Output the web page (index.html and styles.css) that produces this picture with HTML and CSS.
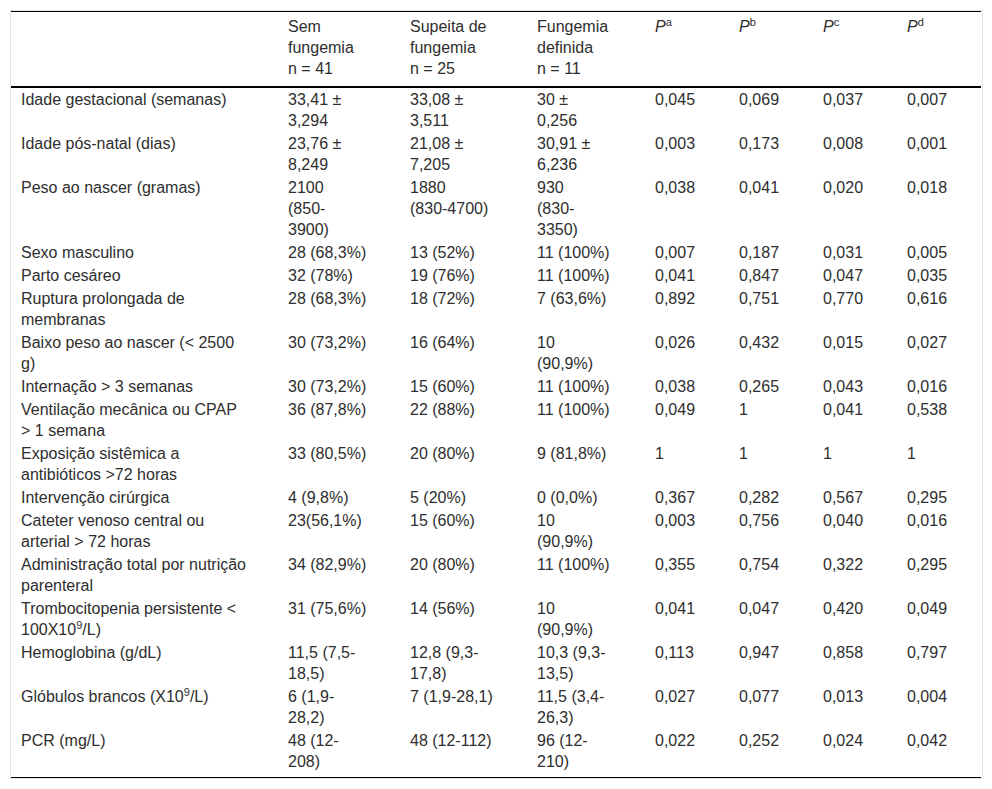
FILE: index.html
```html
<!DOCTYPE html>
<html lang="pt">
<head>
<meta charset="utf-8">
<title>Tabela</title>
<link rel="stylesheet" href="styles.css">
</head>
<body>
<div class="table-wrap">
<table class="data">
<colgroup>
<col class="c-label"><col class="c-g1"><col class="c-g2"><col class="c-g3"><col class="c-p"><col class="c-p"><col class="c-p"><col class="c-p">
</colgroup>
<thead>
<tr>
<th></th>
<th>Sem<br>fungemia<br>n = 41</th>
<th>Supeita de<br>fungemia<br>n = 25</th>
<th>Fungemia<br>definida<br>n = 11</th>
<th><i>P</i><sup>a</sup></th>
<th><i>P</i><sup>b</sup></th>
<th><i>P</i><sup>c</sup></th>
<th><i>P</i><sup>d</sup></th>
</tr>
</thead>
<tbody>
<tr><td>Idade gestacional (semanas)</td><td>33,41 ±<br>3,294</td><td>33,08 ±<br>3,511</td><td>30 ±<br>0,256</td><td>0,045</td><td>0,069</td><td>0,037</td><td>0,007</td></tr>
<tr><td>Idade pós-natal (dias)</td><td>23,76 ±<br>8,249</td><td>21,08 ±<br>7,205</td><td>30,91 ±<br>6,236</td><td>0,003</td><td>0,173</td><td>0,008</td><td>0,001</td></tr>
<tr><td>Peso ao nascer (gramas)</td><td>2100<br>(850-<br>3900)</td><td>1880<br>(830-4700)</td><td>930<br>(830-<br>3350)</td><td>0,038</td><td>0,041</td><td>0,020</td><td>0,018</td></tr>
<tr><td>Sexo masculino</td><td>28 (68,3%)</td><td>13 (52%)</td><td>11 (100%)</td><td>0,007</td><td>0,187</td><td>0,031</td><td>0,005</td></tr>
<tr><td>Parto cesáreo</td><td>32 (78%)</td><td>19 (76%)</td><td>11 (100%)</td><td>0,041</td><td>0,847</td><td>0,047</td><td>0,035</td></tr>
<tr><td>Ruptura prolongada de<br>membranas</td><td>28 (68,3%)</td><td>18 (72%)</td><td>7 (63,6%)</td><td>0,892</td><td>0,751</td><td>0,770</td><td>0,616</td></tr>
<tr><td>Baixo peso ao nascer (&lt; 2500<br>g)</td><td>30 (73,2%)</td><td>16 (64%)</td><td>10<br>(90,9%)</td><td>0,026</td><td>0,432</td><td>0,015</td><td>0,027</td></tr>
<tr><td>Internação &gt; 3 semanas</td><td>30 (73,2%)</td><td>15 (60%)</td><td>11 (100%)</td><td>0,038</td><td>0,265</td><td>0,043</td><td>0,016</td></tr>
<tr><td>Ventilação mecânica ou CPAP<br>&gt; 1 semana</td><td>36 (87,8%)</td><td>22 (88%)</td><td>11 (100%)</td><td>0,049</td><td>1</td><td>0,041</td><td>0,538</td></tr>
<tr><td>Exposição sistêmica a<br>antibióticos &gt;72 horas</td><td>33 (80,5%)</td><td>20 (80%)</td><td>9 (81,8%)</td><td>1</td><td>1</td><td>1</td><td>1</td></tr>
<tr><td>Intervenção cirúrgica</td><td>4 (9,8%)</td><td>5 (20%)</td><td>0 (0,0%)</td><td>0,367</td><td>0,282</td><td>0,567</td><td>0,295</td></tr>
<tr><td>Cateter venoso central ou<br>arterial &gt; 72 horas</td><td>23(56,1%)</td><td>15 (60%)</td><td>10<br>(90,9%)</td><td>0,003</td><td>0,756</td><td>0,040</td><td>0,016</td></tr>
<tr><td>Administração total por nutrição<br>parenteral</td><td>34 (82,9%)</td><td>20 (80%)</td><td>11 (100%)</td><td>0,355</td><td>0,754</td><td>0,322</td><td>0,295</td></tr>
<tr><td>Trombocitopenia persistente &lt;<br>100X10<sup>9</sup>/L)</td><td>31 (75,6%)</td><td>14 (56%)</td><td>10<br>(90,9%)</td><td>0,041</td><td>0,047</td><td>0,420</td><td>0,049</td></tr>
<tr><td>Hemoglobina (g/dL)</td><td>11,5 (7,5-<br>18,5)</td><td>12,8 (9,3-<br>17,8)</td><td>10,3 (9,3-<br>13,5)</td><td>0,113</td><td>0,947</td><td>0,858</td><td>0,797</td></tr>
<tr><td>Glóbulos brancos (X10<sup>9</sup>/L)</td><td>6 (1,9-<br>28,2)</td><td>7 (1,9-28,1)</td><td>11,5 (3,4-<br>26,3)</td><td>0,027</td><td>0,077</td><td>0,013</td><td>0,004</td></tr>
<tr><td>PCR (mg/L)</td><td>48 (12-<br>208)</td><td>48 (12-112)</td><td>96 (12-<br>210)</td><td>0,022</td><td>0,252</td><td>0,024</td><td>0,042</td></tr>
</tbody>
</table>
</div>
</body>
</html>
```

FILE: styles.css
```css
html, body {
  margin: 0;
  padding: 0;
  background: #ffffff;
}

body {
  padding: 10px;
  font-family: "Liberation Sans", Arial, sans-serif;
  font-size: 16px;
  line-height: 21px;
  color: #2e2e2e;
}

.table-wrap {
  width: 973px;
  box-sizing: border-box;
  border: 1px solid #e4e4e4;
}

.data {
  width: 970px;
  border-collapse: collapse;
  table-layout: fixed;
  border-top: 1px solid #000;
  border-bottom: 1px solid #000;
}

.c-label { width: 267px; }
.c-g1 { width: 122px; }
.c-g2 { width: 127px; }
.c-g3 { width: 118px; }
.c-p { width: 84px; }

.data th,
.data td {
  text-align: left;
  vertical-align: top;
  white-space: nowrap;
  font-weight: normal;
}

.data th {
  padding: 4px 10px 7px 10px;
  border-bottom: 2px solid #000;
}

.data td {
  padding: 1px 10px;
}

.data tbody tr:last-child td {
  padding-bottom: 5px;
}

.data sup {
  font-size: 11px;
  line-height: 0;
}
```
